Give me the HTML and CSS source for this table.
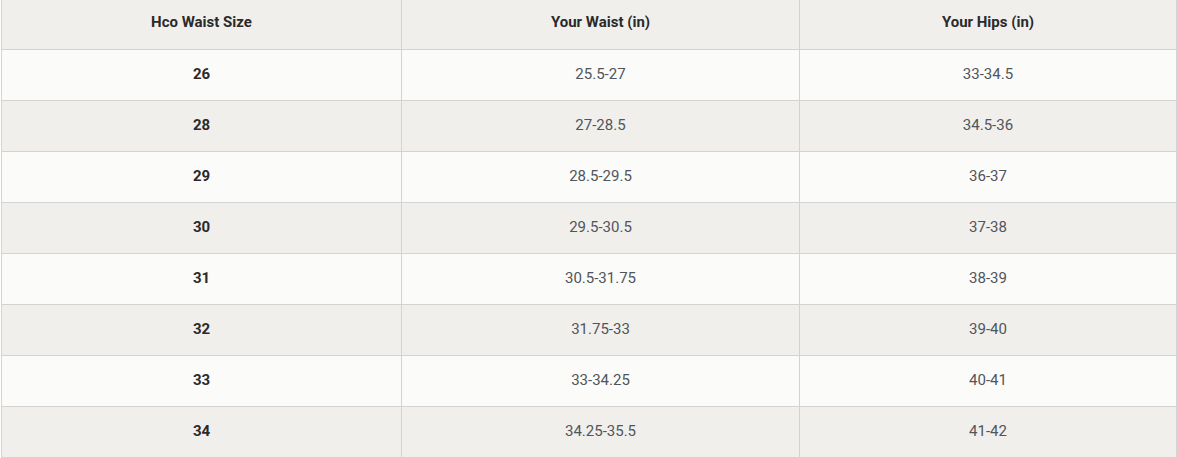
FILE: index.html
```html
<!DOCTYPE html>
<html lang="en">
<head>
<meta charset="utf-8">
<title>Size chart</title>
<link rel="stylesheet" href="styles.css">
</head>
<body>
<table class="size-table">
  <colgroup>
    <col class="col-a">
    <col class="col-b">
    <col class="col-c">
  </colgroup>
  <thead>
    <tr><th>Hco Waist Size</th><th>Your Waist (in)</th><th>Your Hips (in)</th></tr>
  </thead>
  <tbody>
    <tr><td class="size">26</td><td>25.5-27</td><td>33-34.5</td></tr>
    <tr><td class="size">28</td><td>27-28.5</td><td>34.5-36</td></tr>
    <tr><td class="size">29</td><td>28.5-29.5</td><td>36-37</td></tr>
    <tr><td class="size">30</td><td>29.5-30.5</td><td>37-38</td></tr>
    <tr><td class="size">31</td><td>30.5-31.75</td><td>38-39</td></tr>
    <tr><td class="size">32</td><td>31.75-33</td><td>39-40</td></tr>
    <tr><td class="size">33</td><td>33-34.25</td><td>40-41</td></tr>
    <tr><td class="size">34</td><td>34.25-35.5</td><td>41-42</td></tr>
  </tbody>
</table>
</body>
</html>
```
FILE: styles.css
```css
html, body {
  margin: 0;
  padding: 0;
  background: #ffffff;
}
body {
  padding-left: 1px;
  font-family: Roboto, "Liberation Sans", sans-serif;
}
.size-table {
  border-collapse: collapse;
  table-layout: fixed;
  width: 1175px;
  font-size: 15px;
}
.col-a { width: 400px; }
.col-b { width: 398px; }
.col-c { width: 377px; }
.size-table th,
.size-table td {
  border: 1px solid #d3d3d2;
  text-align: center;
  vertical-align: middle;
  padding: 0;
}
.size-table thead tr {
  height: 49px;
}
.size-table th {
  border-top: none;
  background: #f1efec;
  color: #2a2a2a;
  font-weight: 700;
  padding-bottom: 4px;
}
.size-table tbody tr {
  height: 51px;
}
.size-table tbody tr:nth-child(odd) td {
  background: #fbfbfa;
}
.size-table tbody tr:nth-child(even) td {
  background: #f1efec;
}
.size-table td {
  color: #50555b;
  font-weight: 400;
  padding-bottom: 2px;
}
.size-table td.size {
  color: #2a2a2a;
  font-weight: 700;
}
```
